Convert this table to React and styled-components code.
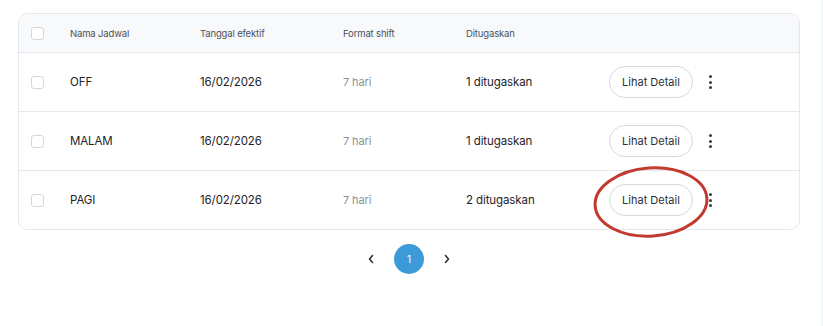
import styled, { createGlobalStyle } from 'styled-components';

const GlobalStyle = createGlobalStyle`
	body {
		margin: 0;
		background: #ffffff;
		font-family: 'Inter', 'Lato', sans-serif;
		color: #1f2329;
	}
`;

const Page = styled.div`
	width: 823px;
	height: 326px;
	box-sizing: border-box;
	padding: 13px 21px 0 18px;
	border-right: 2px solid #f1f5f9;
`;

const CardWrap = styled.div`
	position: relative;
`;

const Card = styled.div`
	border: 1px solid #e4e7eb;
	border-radius: 10px;
	overflow: hidden;
`;

const Row = styled.div`
	display: grid;
	grid-template-columns: 51px 130px 143px 123px 143px 1fr;
	align-items: center;
	height: ${(p) => (p.$head ? '38px' : '58px')};
	background: ${(p) => (p.$head ? '#f7f9fb' : '#ffffff')};
	border-top: ${(p) => (p.$first ? 'none' : '1px solid #e4e7eb')};
`;

const Check = styled.span`
	display: block;
	width: 11px;
	height: 11px;
	margin-left: 12px;
	border: 1px solid #d3d7dd;
	border-radius: 3px;
	background: #fff;
`;

const HeadCell = styled.div`
	font-size: 9.5px;
	color: #4b5058;
	letter-spacing: -0.15px;
`;

const Cell = styled.div`
	font-size: ${(p) => (p.$muted ? '11px' : '11.5px')};
	color: ${(p) => (p.$muted ? '#8a8f96' : '#1f2329')};
	font-weight: 400;
	letter-spacing: -0.1px;
`;

const Actions = styled.div`
	display: flex;
	align-items: center;
	gap: 16px;
`;

const DetailButton = styled.button`
	width: 84px;
	height: 32px;
	border: 1px solid #d6dadf;
	border-radius: 16px;
	background: #fff;
	font-family: inherit;
	font-size: 11px;
	font-weight: 400;
	color: #2b3038;
	cursor: pointer;
`;

const Dots = styled.div`
	display: flex;
	flex-direction: column;
	gap: 2.5px;
	span {
		width: 3px;
		height: 3px;
		border-radius: 50%;
		background: #3a3f46;
	}
`;

const Circle = styled.svg`
	position: absolute;
	left: 573px;
	top: 151px;
	pointer-events: none;
`;

const Pager = styled.div`
	display: flex;
	justify-content: center;
	align-items: center;
	gap: 16px;
	margin-top: 14px;
`;

const Arrow = styled.div`
	width: 14px;
	display: flex;
	justify-content: center;
	color: #2b3038;
`;

const PageDot = styled.div`
	width: 30px;
	height: 30px;
	border-radius: 50%;
	background: #3d9ad8;
	color: #fff;
	font-size: 10px;
	display: flex;
	align-items: center;
	justify-content: center;
`;

const rows = [
	{ name: 'OFF', date: '16/02/2026', format: '7 hari', assigned: '1 ditugaskan' },
	{ name: 'MALAM', date: '16/02/2026', format: '7 hari', assigned: '1 ditugaskan' },
	{ name: 'PAGI', date: '16/02/2026', format: '7 hari', assigned: '2 ditugaskan' },
];

const Chevron = ({ dir }) => (
	<svg width="8" height="10" viewBox="0 0 8 10">
		<path
			d={dir === 'left' ? 'M5.5 1.5 L2.5 5 L5.5 8.5' : 'M2.5 1.5 L5.5 5 L2.5 8.5'}
			fill="none"
			stroke="currentColor"
			strokeWidth="1.6"
			strokeLinecap="round"
			strokeLinejoin="round"
		/>
	</svg>
);

const App = () => {
	return (
		<>
			<GlobalStyle />
			<Page>
				<CardWrap>
					<Card>
						<Row $head $first>
							<Check />
							<HeadCell>Nama Jadwal</HeadCell>
							<HeadCell>Tanggal efektif</HeadCell>
							<HeadCell>Format shift</HeadCell>
							<HeadCell>Ditugaskan</HeadCell>
							<div />
						</Row>
						{rows.map((r) => (
							<Row key={r.name}>
								<Check />
								<Cell>{r.name}</Cell>
								<Cell>{r.date}</Cell>
								<Cell $muted>{r.format}</Cell>
								<Cell>{r.assigned}</Cell>
								<Actions>
									<DetailButton>Lihat Detail</DetailButton>
									<Dots>
										<span />
										<span />
										<span />
									</Dots>
								</Actions>
							</Row>
						))}
					</Card>
					{/* annotation around the last row's button */}
					<Circle width="122" height="80" viewBox="0 0 122 80">
						<ellipse
							cx="60"
							cy="38"
							rx="56"
							ry="34"
							fill="none"
							stroke="#c2392f"
							strokeWidth="3"
							transform="rotate(-4 60 38)"
						/>
					</Circle>
				</CardWrap>
				<Pager>
					<Arrow>
						<Chevron dir="left" />
					</Arrow>
					<PageDot>1</PageDot>
					<Arrow>
						<Chevron dir="right" />
					</Arrow>
				</Pager>
			</Page>
		</>
	);
};

export default App;
